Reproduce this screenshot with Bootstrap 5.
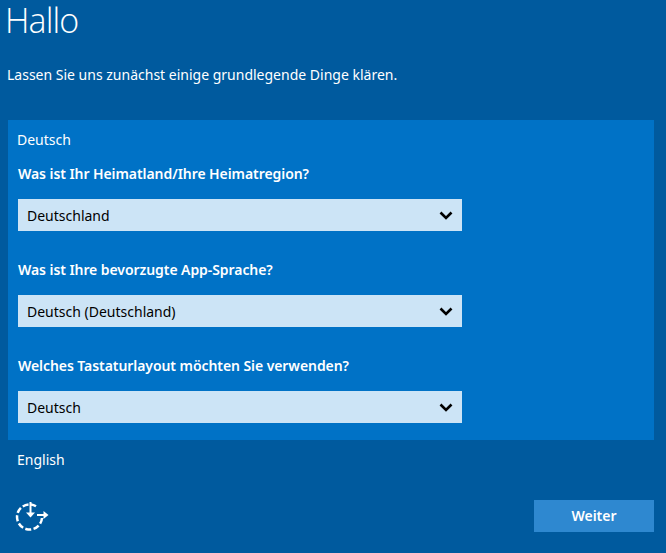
<!doctype html>
<html lang="de">
<head>
<meta charset="utf-8">
<title>Hallo</title>
<link rel="stylesheet" href="https://cdn.jsdelivr.net/npm/bootstrap@5.3.0/dist/css/bootstrap.min.css">
<style>
html,body{height:553px;overflow:hidden}
body{background:#005a9e;color:#fff;font-family:"Noto Sans","Open Sans","Liberation Sans",sans-serif;font-size:14px;line-height:20px}
.oobe{height:553px;padding:0 12px 21px 8px}
.title{font-family:"Open Sans","Noto Sans",sans-serif;font-weight:300;font-size:34px;letter-spacing:-.9px;line-height:40px;margin:0 0 0 -3px;padding-top:0}
.intro{margin:25px 0 0 -1px;height:20px}
.panel{background:#0072c6;margin-top:35px;height:320px;padding:10px 10px 0 10px}
.lang{height:20px;margin-left:-1px}
.q{font-weight:600;font-size:14px;letter-spacing:-.07px;line-height:20px;margin:0;height:21px;padding-top:1px}
.q1{margin-top:13px}
.picker{width:444px;height:32px;margin:15px 0 28px;border:0;border-radius:0;background-color:#cce4f6;color:#000;font-size:14px;line-height:20px;padding:2px 30px 0 9px;background-size:14px 9px;background-position:right 9px center;background-image:url("data:image/svg+xml,%3Csvg xmlns='http://www.w3.org/2000/svg' viewBox='0 0 14 9'%3E%3Cpath d='M1.500 1.500 7 7l5.500-5.500' fill='none' stroke='%23000' stroke-width='2.600'/%3E%3C/svg%3E")}
.other{margin:10px 0 0 9px;height:20px}
.foot{margin-top:auto}
.ease{margin-left:7px;display:block}
.next{width:120px;height:32px;border:0;border-radius:0;background:#2e88d0;color:#fff;font-weight:600;font-size:14px;line-height:20px;padding:0}
</style>
</head>
<body>
<main class="oobe d-flex flex-column">
  <h1 class="title">Hallo</h1>
  <p class="intro">Lassen Sie uns zunächst einige grundlegende Dinge klären.</p>
  <section class="panel">
    <div class="lang">Deutsch</div>
    <label class="q q1 d-block" for="a">Was ist Ihr Heimatland/Ihre Heimatregion?</label>
    <select id="a" class="form-select picker"><option>Deutschland</option></select>
    <label class="q d-block" for="b">Was ist Ihre bevorzugte App-Sprache?</label>
    <select id="b" class="form-select picker"><option>Deutsch (Deutschland)</option></select>
    <label class="q d-block" for="c">Welches Tastaturlayout möchten Sie verwenden?</label>
    <select id="c" class="form-select picker"><option>Deutsch</option></select>
  </section>
  <div class="other">English</div>
  <div class="foot d-flex justify-content-between align-items-center">
    <svg class="ease" width="34" height="32" viewBox="0 0 34 32" fill="none" stroke="#fff" aria-label="Erleichterte Bedienung">
      <path d="M27 18A12.500 12.500 0 1 1 21 6.300" stroke-width="2.500" stroke-dasharray="6 2.400"/>
      <path d="M15.500 2V14" stroke-width="2"/>
      <path d="M11 12.500h9l-4.500 5z" fill="#fff" stroke="none"/>
      <path d="M22 15H30" stroke-width="2"/>
      <path d="M28.500 11l5 4-5 4z" fill="#fff" stroke="none"/>
    </svg>
    <button type="button" class="btn next">Weiter</button>
  </div>
</main>
<script src="https://cdn.jsdelivr.net/npm/bootstrap@5.3.0/dist/js/bootstrap.bundle.min.js"></script>
</body>
</html>
